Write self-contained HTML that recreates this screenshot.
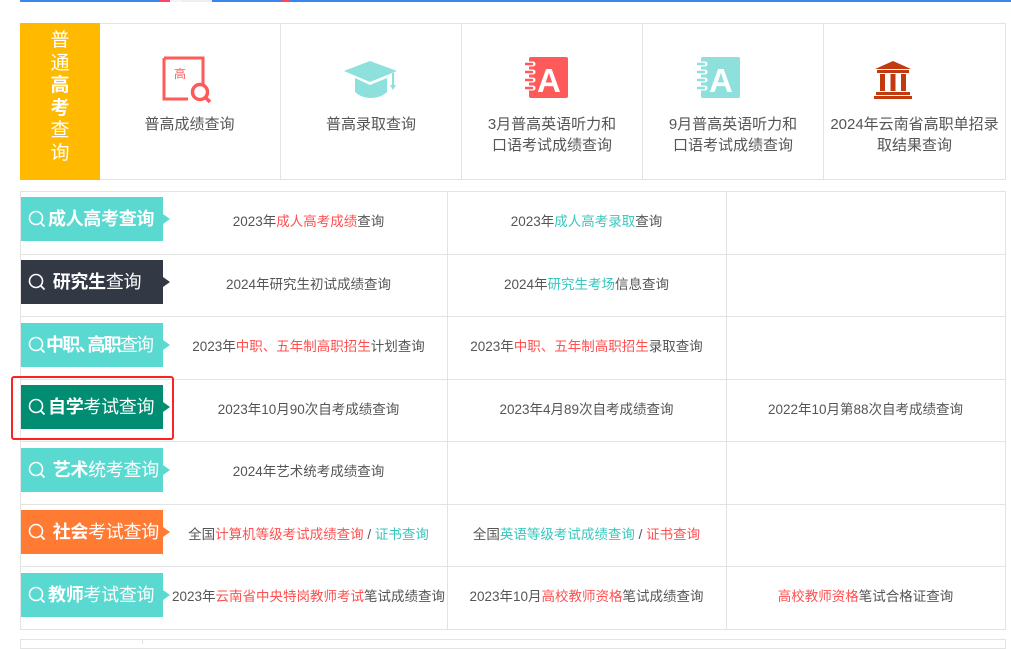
<!DOCTYPE html>
<html><head><meta charset="utf-8">
<style>
*{margin:0;padding:0;box-sizing:border-box}
body{width:1011px;height:642px;overflow:hidden;background:#fff;font-family:"Liberation Sans","Noto Sans CJK SC",sans-serif;position:relative;color:#555}
.abs{position:absolute}
.topbar{left:20px;top:0;width:991px;height:2px;background:#3a86f0}
.box{left:20px;top:23px;width:986px;height:157px;border:1px solid #e3e3e3}
.yel{left:20px;top:23px;width:80px;height:157px;background:#ffba00;color:#fff;font-size:19px;line-height:22.5px;text-align:center;padding-top:7px}
.cell{top:23px;height:157px;border-left:1px solid #e3e3e3;text-align:center;font-size:15px;line-height:21px;color:#555}
.cell .t{position:absolute;left:0;right:0;top:91px}
.tbl{left:20px;top:191px;width:986px;height:439px;border:1px solid #e3e3e3}
.hl{left:20px;height:1px;width:986px;background:#e3e3e3}
.vl{width:1px;top:191px;height:439px;background:#e3e3e3}
.lab{left:21px;width:142px;height:44px;color:#fff;font-size:18px;font-weight:bold;line-height:44px;padding-left:27px;white-space:nowrap;letter-spacing:-0.3px}
.lab .n{font-weight:normal}
.lab:after{content:"";position:absolute;right:-7px;top:17px;border-left:7px solid;border-left-color:inherit;border-top:5px solid transparent;border-bottom:5px solid transparent}
.lab svg{position:absolute;left:7px;top:13px}
.txt{font-size:13.5px;color:#555;text-align:center;white-space:nowrap;height:62px;line-height:62px}
.r{color:#ff5050}.g{color:#3ac7bd}
</style></head><body>
<div class="abs topbar"></div>
<div class="abs" style="left:160px;top:0;width:10px;height:2px;background:#ff4466"></div>
<div class="abs" style="left:170px;top:0;width:12px;height:2px;background:#f4f4f4"></div>
<div class="abs" style="left:182px;top:0;width:30px;height:2px;background:#eee"></div>
<div class="abs" style="left:282px;top:0;width:8px;height:2px;background:#ff4466"></div>

<div class="abs box"></div>
<div class="abs yel">普<br>通<br><b>高</b><br><b>考</b><br>查<br>询</div>

<div class="abs cell" style="left:99px;width:181px;border-left:none">
<svg class="abs" style="left:63px;top:33px" width="50" height="50" viewBox="0 0 50 50"><path d="M2 2h39v27" fill="none" stroke="#ff5a5a" stroke-width="3"/><path d="M2 2v41h24" fill="none" stroke="#ff5a5a" stroke-width="3"/><circle cx="38" cy="36" r="7.5" fill="none" stroke="#ff5a5a" stroke-width="3.5"/><path d="M43 41l5 5" stroke="#ff5a5a" stroke-width="3.5"/><text x="12" y="22" font-size="12" fill="#ff5a5a" font-family="Noto Sans CJK SC">高</text></svg>
<div class="t">普高成绩查询</div></div>
<div class="abs cell" style="left:280px;width:181px">
<svg class="abs" style="left:62px;top:36px" width="56" height="44" viewBox="0 0 56 44"><path d="M27 2L54 12 27 23 1 12z" fill="#8de0dc"/><path d="M12 19v14c8 8 24 8 32 0V19l-17 7z" fill="#8de0dc"/><path d="M50 14v12" stroke="#8de0dc" stroke-width="2"/><path d="M47 26h6l-3 5z" fill="#8de0dc"/></svg>
<div class="t">普高录取查询</div></div>
<div class="abs cell" style="left:461px;width:181px">
<svg class="abs" style="left:63px;top:34px" width="44" height="42" viewBox="0 0 44 42"><rect x="4" y="0" width="39" height="41" rx="2" fill="#ff5a5a"/><path d="M0 7h8M0 15h8M0 23h8M0 31h8" stroke="#fff" stroke-width="5" stroke-linecap="round"/><path d="M0 7h7M0 15h7M0 23h7M0 31h7" stroke="#ff5a5a" stroke-width="2.5" stroke-linecap="round"/><text x="12" y="35" font-size="33" font-weight="bold" fill="#fff" font-family="Liberation Sans">A</text></svg>
<div class="t">3月普高英语听力和<br>口语考试成绩查询</div></div>
<div class="abs cell" style="left:642px;width:181px">
<svg class="abs" style="left:54px;top:34px" width="44" height="42" viewBox="0 0 44 42"><rect x="4" y="0" width="39" height="41" rx="2" fill="#8de0dc"/><path d="M0 7h8M0 15h8M0 23h8M0 31h8" stroke="#fff" stroke-width="5" stroke-linecap="round"/><path d="M0 7h7M0 15h7M0 23h7M0 31h7" stroke="#8de0dc" stroke-width="2.5" stroke-linecap="round"/><text x="12" y="35" font-size="33" font-weight="bold" fill="#fff" font-family="Liberation Sans">A</text></svg>
<div class="t">9月普高英语听力和<br>口语考试成绩查询</div></div>
<div class="abs cell" style="left:823px;width:182px">
<svg class="abs" style="left:49px;top:37px" width="40" height="40" viewBox="0 0 40 40"><path d="M20 1L38 9H2z" fill="#c23a10"/><rect x="4" y="10" width="32" height="3" fill="#c23a10"/><rect x="7" y="14" width="5" height="17" fill="#c23a10"/><rect x="17.5" y="14" width="5" height="17" fill="#c23a10"/><rect x="28" y="14" width="5" height="17" fill="#c23a10"/><rect x="3" y="32" width="34" height="3" fill="#c23a10"/><rect x="1" y="36" width="38" height="3" fill="#c23a10"/></svg>
<div class="t">2024年云南省高职单招录<br>取结果查询</div></div>

<div class="abs tbl"></div>
<div class="abs hl" style="top:254px"></div>
<div class="abs hl" style="top:316px"></div>
<div class="abs hl" style="top:379px"></div>
<div class="abs hl" style="top:441px"></div>
<div class="abs hl" style="top:504px"></div>
<div class="abs hl" style="top:566px"></div>
<div class="abs vl" style="left:447px"></div>
<div class="abs vl" style="left:726px"></div>

<div class="abs" style="left:20px;top:639px;width:986px;height:10px;border:1px solid #e3e3e3"></div>
<div class="abs" style="left:142px;top:639px;width:1px;height:5px;background:#e3e3e3"></div>

<div class="abs lab" style="top:197px;background:#5ad9d1;border-left-color:#5ad9d1"><svg width="18" height="18" viewBox="0 0 18 18"><circle cx="8" cy="8" r="6.5" fill="none" stroke="#fff" stroke-width="1.6"/><path d="M12.5 12.5l4 4" stroke="#fff" stroke-width="1.8"/></svg>成人高考查询</div>
<div class="abs lab" style="top:260px;background:#323844;border-left-color:#323844"><svg width="18" height="18" viewBox="0 0 18 18"><circle cx="8" cy="8" r="6.5" fill="none" stroke="#fff" stroke-width="1.6"/><path d="M12.5 12.5l4 4" stroke="#fff" stroke-width="1.8"/></svg>&nbsp;研究生<span class="n">查询</span></div>
<div class="abs lab" style="top:323px;background:#5ad9d1;border-left-color:#5ad9d1;padding-left:25px;letter-spacing:-1.8px"><svg width="18" height="18" viewBox="0 0 18 18"><circle cx="8" cy="8" r="6.5" fill="none" stroke="#fff" stroke-width="1.6"/><path d="M12.5 12.5l4 4" stroke="#fff" stroke-width="1.8"/></svg>中职<span style="letter-spacing:-9px">、</span>高职<span class="n">查询</span></div>
<div class="abs lab" style="top:385px;background:#008d72;border-left-color:#008d72"><svg width="18" height="18" viewBox="0 0 18 18"><circle cx="8" cy="8" r="6.5" fill="none" stroke="#fff" stroke-width="1.6"/><path d="M12.5 12.5l4 4" stroke="#fff" stroke-width="1.8"/></svg>自学<span class="n">考试查询</span></div>
<div class="abs" style="left:11px;top:376px;width:163px;height:64px;border:2px solid #f22;border-radius:3px"></div>
<div class="abs lab" style="top:448px;background:#5ad9d1;border-left-color:#5ad9d1"><svg width="18" height="18" viewBox="0 0 18 18"><circle cx="8" cy="8" r="6.5" fill="none" stroke="#fff" stroke-width="1.6"/><path d="M12.5 12.5l4 4" stroke="#fff" stroke-width="1.8"/></svg>&nbsp;艺术<span class="n">统考查询</span></div>
<div class="abs lab" style="top:510px;background:#ff7a33;border-left-color:#ff7a33"><svg width="18" height="18" viewBox="0 0 18 18"><circle cx="8" cy="8" r="6.5" fill="none" stroke="#fff" stroke-width="1.6"/><path d="M12.5 12.5l4 4" stroke="#fff" stroke-width="1.8"/></svg>&nbsp;社会<span class="n">考试查询</span></div>
<div class="abs lab" style="top:573px;background:#5ad9d1;border-left-color:#5ad9d1"><svg width="18" height="18" viewBox="0 0 18 18"><circle cx="8" cy="8" r="6.5" fill="none" stroke="#fff" stroke-width="1.6"/><path d="M12.5 12.5l4 4" stroke="#fff" stroke-width="1.8"/></svg>教师<span class="n">考试查询</span></div>

<div class="abs txt" style="left:170px;width:277px;top:191px">2023年<span class="r">成人高考成绩</span>查询</div>
<div class="abs txt" style="left:170px;width:277px;top:254px">2024年研究生初试成绩查询</div>
<div class="abs txt" style="left:170px;width:277px;top:316px">2023年<span class="r">中职、五年制高职招生</span>计划查询</div>
<div class="abs txt" style="left:170px;width:277px;top:379px">2023年10月90次自考成绩查询</div>
<div class="abs txt" style="left:170px;width:277px;top:441px">2024年艺术统考成绩查询</div>
<div class="abs txt" style="left:170px;width:277px;top:504px">全国<span class="r">计算机等级考试成绩查询</span> / <span class="g">证书查询</span></div>
<div class="abs txt" style="left:170px;width:277px;top:566px">2023年<span class="r">云南省中央特岗教师考试</span>笔试成绩查询</div>
<div class="abs txt" style="left:447px;width:279px;top:191px">2023年<span class="g">成人高考录取</span>查询</div>
<div class="abs txt" style="left:447px;width:279px;top:254px">2024年<span class="g">研究生考场</span>信息查询</div>
<div class="abs txt" style="left:447px;width:279px;top:316px">2023年<span class="r">中职、五年制高职招生</span>录取查询</div>
<div class="abs txt" style="left:447px;width:279px;top:379px">2023年4月89次自考成绩查询</div>
<div class="abs txt" style="left:447px;width:279px;top:504px">全国<span class="g">英语等级考试成绩查询</span> / <span class="r">证书查询</span></div>
<div class="abs txt" style="left:447px;width:279px;top:566px">2023年10月<span class="r">高校教师资格</span>笔试成绩查询</div>
<div class="abs txt" style="left:726px;width:279px;top:379px">2022年10月第88次自考成绩查询</div>
<div class="abs txt" style="left:726px;width:279px;top:566px"><span class="r">高校教师资格</span>笔试合格证查询</div>
</body></html>
